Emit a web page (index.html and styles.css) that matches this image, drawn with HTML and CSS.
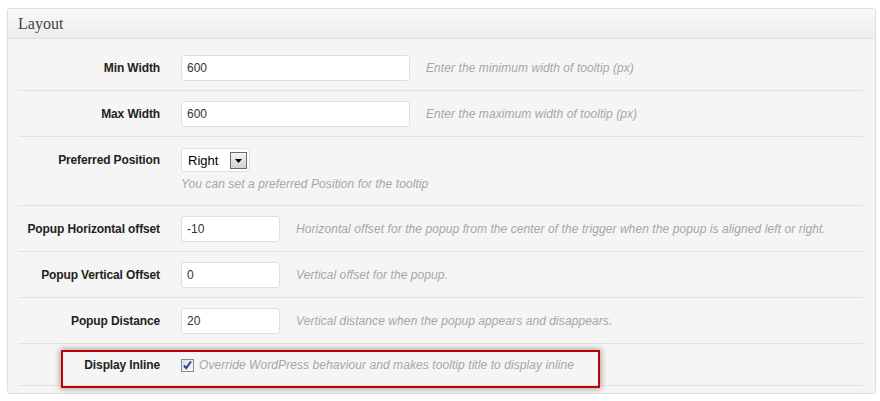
FILE: index.html
```html
<!DOCTYPE html>
<html>
<head>
<meta charset="utf-8">
<link rel="stylesheet" href="styles.css">
</head>
<body>
<div class="panel">
  <div class="panel-head"><h3>Layout</h3></div>
  <div class="panel-body">
    <div class="row">
      <div class="label">Min Width</div>
      <div class="field"><span class="input wide">600</span><span class="desc">Enter the minimum width of tooltip (px)</span></div>
    </div>
    <div class="row">
      <div class="label">Max Width</div>
      <div class="field"><span class="input wide">600</span><span class="desc">Enter the maximum width of tooltip (px)</span></div>
    </div>
    <div class="row row-select">
      <div class="label label-select">Preferred Position</div>
      <div class="field-stack">
        <div class="select"><span class="select-text">Right</span><span class="select-btn"><svg width="7" height="4" viewBox="0 0 7 4"><path d="M0 0h7L3.5 4z" fill="#000"/></svg></span></div>
        <div class="desc desc-block">You can set a preferred Position for the tooltip</div>
      </div>
    </div>
    <div class="row">
      <div class="label">Popup Horizontal offset</div>
      <div class="field"><span class="input small">-10</span><span class="desc">Horizontal offset for the popup from the center of the trigger when the popup is aligned left or right.</span></div>
    </div>
    <div class="row">
      <div class="label">Popup Vertical Offset</div>
      <div class="field"><span class="input small">0</span><span class="desc">Vertical offset for the popup.</span></div>
    </div>
    <div class="row">
      <div class="label">Popup Distance</div>
      <div class="field"><span class="input small">20</span><span class="desc">Vertical distance when the popup appears and disappears.</span></div>
    </div>
    <div class="row row-check">
      <div class="label label-check">Display Inline</div>
      <div class="field field-check">
        <span class="checkbox"><svg width="11" height="11" viewBox="0 0 11 11"><path d="M2 5.5l2.2 2.6L9 1.5" fill="none" stroke="#2b3f9e" stroke-width="2"/></svg></span>
        <span class="desc desc-check">Override WordPress behaviour and makes tooltip title to display inline</span>
      </div>
      <div class="highlight"></div>
    </div>
  </div>
</div>
</body>
</html>
```
FILE: styles.css
```css
html, body {
  margin: 0;
  background: #fff;
}
body {
  padding: 8px 0 0 7px;
  font-family: "Liberation Sans", Arial, sans-serif;
  font-size: 12px;
  color: #222;
}
.panel {
  width: 867px;
  border: 1px solid #dfdfdf;
  border-radius: 3px;
  background: #f5f5f5;
  box-shadow: 0 1px 1px rgba(0,0,0,0.05);
}
.panel-head {
  height: 29px;
  border-bottom: 1px solid #dfdfdf;
  border-radius: 3px 3px 0 0;
  background: linear-gradient(to bottom, #f9f9f9, #ececec);
  display: flex;
  align-items: center;
  padding-left: 10px;
}
.panel-head h3 {
  margin: 0;
  font-family: "Liberation Serif", "Times New Roman", serif;
  font-weight: normal;
  font-size: 16px;
  color: #464646;
}
.panel-body {
  padding: 6px 12px 7px 10px;
}
.row {
  display: grid;
  grid-template-columns: 142px 1fr;
  column-gap: 21px;
  padding: 10px 0 9px;
  border-bottom: 1px solid #e2e2e2;
  position: relative;
}
.label {
  text-align: right;
  font-weight: bold;
  line-height: 26px;
  white-space: nowrap;
  letter-spacing: -0.12px;
}
.field {
  display: flex;
  align-items: center;
  height: 26px;
}
.input {
  box-sizing: border-box;
  height: 26px;
  border: 1px solid #dfdfdf;
  border-radius: 3px;
  background: #fff;
  padding: 0 5px;
  line-height: 24px;
  font-size: 12px;
  color: #333;
}
.input.wide { width: 229px; }
.input.small { width: 99px; }
.desc {
  font-style: italic;
  color: #a6a6a6;
  margin-left: 16px;
  white-space: nowrap;
  letter-spacing: 0.08px;
}
.label-select {
  line-height: 24px;
  margin-top: 1px;
}
.field-stack {
  display: flex;
  flex-direction: column;
  align-items: flex-start;
}
.select {
  box-sizing: border-box;
  margin-top: 1px;
  width: 69px;
  height: 24px;
  border: 1px solid #dfdfdf;
  border-radius: 3px;
  background: #fff;
  display: flex;
  align-items: center;
  justify-content: space-between;
  padding: 0 2px 0 6px;
  font-size: 13px;
  color: #000;
}
.select-btn {
  box-sizing: border-box;
  width: 17px;
  height: 17px;
  border: 1px solid #6b6b6b;
  background: linear-gradient(to bottom, #f4f4f4, #d0d0d0);
  display: flex;
  align-items: center;
  justify-content: center;
  padding-top: 2px;
}
.select-btn svg { display: block; }
.desc-block {
  margin: 3px 0 3px 0;
  line-height: 18px;
}
.label-check {
  line-height: 22px;
}
.field-check {
  height: 22px;
}
.checkbox {
  box-sizing: border-box;
  width: 13px;
  height: 13px;
  border: 1px solid #8a8a8a;
  background: linear-gradient(to bottom right, #dcdcdc, #fbfbfb);
  display: flex;
  align-items: center;
  justify-content: center;
}
.checkbox svg { display: block; }
.desc-check {
  margin-left: 5px;
}
.highlight {
  position: absolute;
  left: 43px;
  top: 6px;
  width: 539px;
  height: 38px;
  box-sizing: border-box;
  border: 2px solid #c30000;
  box-shadow: 0 0 6px 1px rgba(0,0,0,0.35);
}
```
